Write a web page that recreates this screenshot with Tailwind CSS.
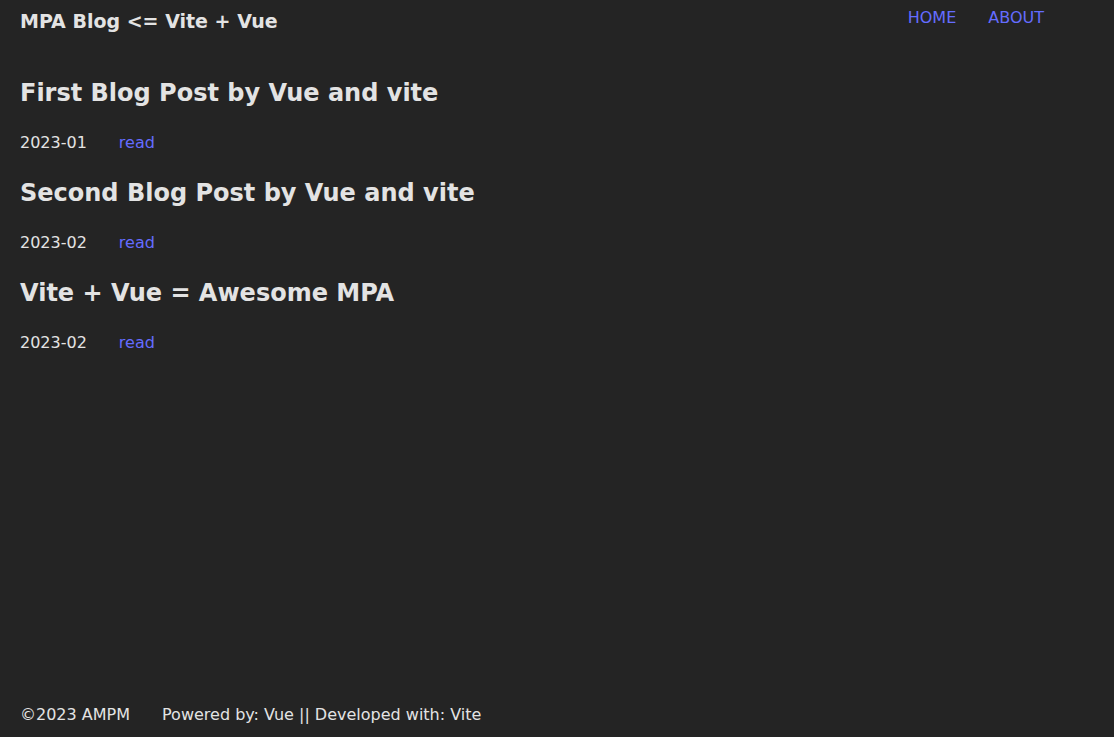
<!DOCTYPE html>
<html lang="en">
<head>
<meta charset="utf-8">
<title>MPA Blog</title>
<script src="https://cdn.jsdelivr.net/npm/@tailwindcss/browser@4"></script>
</head>
<body class="flex min-h-screen flex-col bg-[#242424] px-5 font-['DejaVu_Sans',sans-serif] text-base leading-6 text-[#e3e3e3]">
<header class="flex items-start justify-between pt-2">
<h1 class="text-[19px] leading-[27px] font-bold">MPA Blog &lt;= Vite + Vue</h1>
<nav class="flex gap-8 pr-[50px] leading-5 text-[#646cff]">
<a href="#home">HOME</a>
<a href="#about">ABOUT</a>
</nav>
</header>
<main class="flex grow flex-col gap-5 pt-10">
<article>
<h2 class="text-2xl leading-9 font-bold">First Blog Post by Vue and vite</h2>
<p class="mt-5 flex gap-8"><span>2023-01</span><a href="#first" class="text-[#646cff]">read</a></p>
</article>
<article>
<h2 class="text-2xl leading-9 font-bold">Second Blog Post by Vue and vite</h2>
<p class="mt-5 flex gap-8"><span>2023-02</span><a href="#second" class="text-[#646cff]">read</a></p>
</article>
<article>
<h2 class="text-2xl leading-9 font-bold">Vite + Vue = Awesome MPA</h2>
<p class="mt-5 flex gap-8"><span>2023-02</span><a href="#third" class="text-[#646cff]">read</a></p>
</article>
</main>
<footer class="flex gap-8 pb-2.5">
<span>©2023 AMPM</span>
<span>Powered by: Vue || Developed with: Vite</span>
</footer>
</body>
</html>
